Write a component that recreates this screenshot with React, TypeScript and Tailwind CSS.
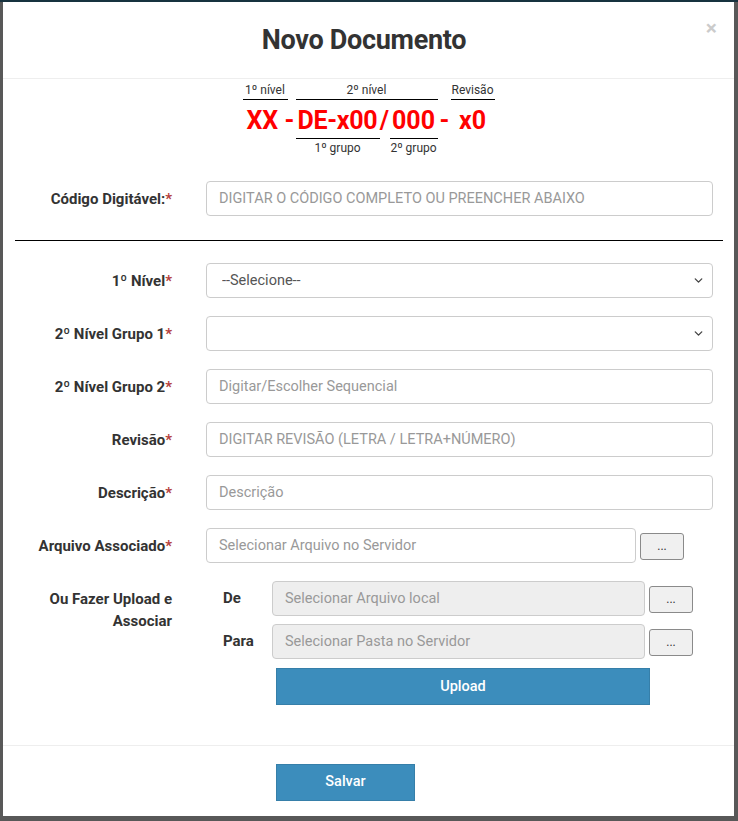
import React from 'react';
import { ChevronDown } from 'lucide-react';

const font = { fontFamily: 'Roboto, "Noto Sans", sans-serif' };

const Req = () => <span className="text-[#b5413d]">*</span>;

const Label: React.FC<{ children: React.ReactNode }> = ({ children }) => (
  <label className="w-[154px] shrink-0 text-right text-[15px] font-bold text-[#333] leading-[20px]">
    {children}
  </label>
);

const TextInput: React.FC<{ placeholder: string; disabled?: boolean; className?: string }> = ({
  placeholder,
  disabled,
  className = '',
}) => (
  <input
    placeholder={placeholder}
    disabled={disabled}
    className={`h-[35px] rounded-[4px] border border-[#ccc] px-[12px] text-[14.5px] text-[#555] placeholder:text-[#999] outline-none ${
      disabled ? 'bg-[#eee]' : 'bg-white'
    } ${className}`}
    style={font}
  />
);

const Select: React.FC<{ value?: string }> = ({ value }) => (
  <div className="relative flex-1">
    <select
      className="h-[35px] w-full appearance-none rounded-[4px] border border-[#ccc] bg-white pl-[15px] pr-8 text-[14.5px] text-[#555] outline-none"
      style={font}
      defaultValue=""
    >
      <option value="">{value ?? ''}</option>
    </select>
    <ChevronDown className="pointer-events-none absolute right-[8px] top-[11px] h-[13px] w-[13px] text-[#444]" strokeWidth={2.5} />
  </div>
);

const DotsButton: React.FC<{ className?: string }> = ({ className = '' }) => (
  <button
    className={`h-[27px] w-[44px] shrink-0 rounded-[3px] border border-[#8a8a8a] bg-[#f0f0f0] text-[12px] leading-none text-[#333] ${className}`}
    style={font}
  >
    ...
  </button>
);

export default function App() {
  return (
    <div className="min-h-[821px] border-t-2 border-[#17323f] bg-[#585858] pl-[3px] pr-[4px] pb-[5px]" style={font}>
      <div className="flex flex-col bg-white">
        {/* header */}
        <div className="relative flex h-[77px] items-center justify-center border-b border-[#eee] pr-[9px]">
          <h4 className="text-[27px] font-bold tracking-[-0.3px] text-[#333]">Novo Documento</h4>
          <button className="absolute right-[17px] top-[16px] text-[21px] font-bold leading-none text-[#000] opacity-20">×</button>
        </div>

        {/* body */}
        <div className="pb-[40px]">
          {/* code diagram */}
          <div className="mx-auto mt-[4px] w-[252px] text-[#333]">
            <div className="flex text-[12px] leading-[15px]">
              <div className="w-[45px] border-b border-black pb-[1px] text-center">1º nível</div>
              <div className="ml-[8px] w-[142px] border-b border-black pb-[1px] text-center">2º nível</div>
              <div className="ml-[13px] w-[44px] border-b border-black pb-[1px] text-center">Revisão</div>
            </div>
            <div className="flex h-[38px] items-center whitespace-nowrap pt-[2px] text-[25px] font-bold leading-none text-[#ff0000]">
              <span className="w-[53px] shrink-0 pl-[4px]">XX -</span>
              <span className="w-[84px] shrink-0 text-center tracking-[-0.3px]">DE-x00</span>
              <span className="w-[10px] shrink-0 text-center">/</span>
              <span className="w-[48px] shrink-0 text-center">000</span>
              <span className="w-[13px] shrink-0 pl-[2px]">-</span>
              <span className="w-[44px] shrink-0 text-center">x0</span>
            </div>
            <div className="flex text-[12px] leading-[15px]">
              <div className="ml-[53px] w-[84px] border-t border-black pt-[2px] text-center">1º grupo</div>
              <div className="ml-[10px] w-[48px] border-t border-black pt-[2px] text-center">2º grupo</div>
            </div>
          </div>

          {/* código digitável */}
          <div className="mt-[25px] flex items-center pl-[15px] pr-[21px]">
            <Label>
              Código Digitável:<Req />
            </Label>
            <TextInput placeholder="DIGITAR O CÓDIGO COMPLETO OU PREENCHER ABAIXO" className="ml-[34px] flex-1" />
          </div>

          <div className="ml-[12px] mr-[11px] mt-[24px] border-t border-black" />

          <div className="mt-[22px] flex flex-col gap-[18px] pl-[15px] pr-[21px]">
            <div className="flex items-center">
              <Label>
                1º Nível<Req />
              </Label>
              <div className="ml-[34px] flex flex-1">
                <Select value="--Selecione--" />
              </div>
            </div>
            <div className="flex items-center">
              <Label>
                2º Nível Grupo 1<Req />
              </Label>
              <div className="ml-[34px] flex flex-1">
                <Select />
              </div>
            </div>
            <div className="flex items-center">
              <Label>
                2º Nível Grupo 2<Req />
              </Label>
              <TextInput placeholder="Digitar/Escolher Sequencial" className="ml-[34px] flex-1" />
            </div>
            <div className="flex items-center">
              <Label>
                Revisão<Req />
              </Label>
              <TextInput placeholder="DIGITAR REVISÃO (LETRA / LETRA+NÚMERO)" className="ml-[34px] flex-1" />
            </div>
            <div className="flex items-center">
              <Label>
                Descrição<Req />
              </Label>
              <TextInput placeholder="Descrição" className="ml-[34px] flex-1" />
            </div>
            <div className="flex items-center">
              <Label>
                Arquivo Associado<Req />
              </Label>
              <TextInput placeholder="Selecionar Arquivo no Servidor" className="ml-[34px] w-[430px]" />
              <DotsButton className="ml-[4px] mt-[1px]" />
            </div>

            {/* upload */}
            <div className="flex items-start">
              <label className="mt-[7px] w-[154px] shrink-0 text-right text-[15px] font-bold leading-[22px] text-[#333]">
                Ou Fazer Upload e<br />
                Associar
              </label>
              <div className="ml-[51px] flex flex-col">
                <div className="flex items-center">
                  <span className="w-[49px] text-[15px] font-bold text-[#333]">De</span>
                  <TextInput placeholder="Selecionar Arquivo local" disabled className="w-[373px]" />
                  <DotsButton className="ml-[4px] mt-[1px]" />
                </div>
                <div className="mt-[8px] flex items-center">
                  <span className="w-[49px] text-[15px] font-bold text-[#333]">Para</span>
                  <TextInput placeholder="Selecionar Pasta no Servidor" disabled className="w-[373px]" />
                  <DotsButton className="ml-[4px] mt-[1px]" />
                </div>
                <button className="ml-[53px] mt-[9px] h-[37px] w-[374px] border border-[#367fa9] bg-[#3c8dbc] text-[14.5px] font-medium text-white">
                  Upload
                </button>
              </div>
            </div>
          </div>
        </div>

        {/* footer */}
        <div className="flex h-[71px] items-center border-t border-[#eee] pl-[273px] pt-[2px]">
          <button className="h-[37px] w-[139px] border border-[#367fa9] bg-[#3c8dbc] text-[14.5px] font-medium text-white">
            Salvar
          </button>
        </div>
      </div>
    </div>
  );
}
